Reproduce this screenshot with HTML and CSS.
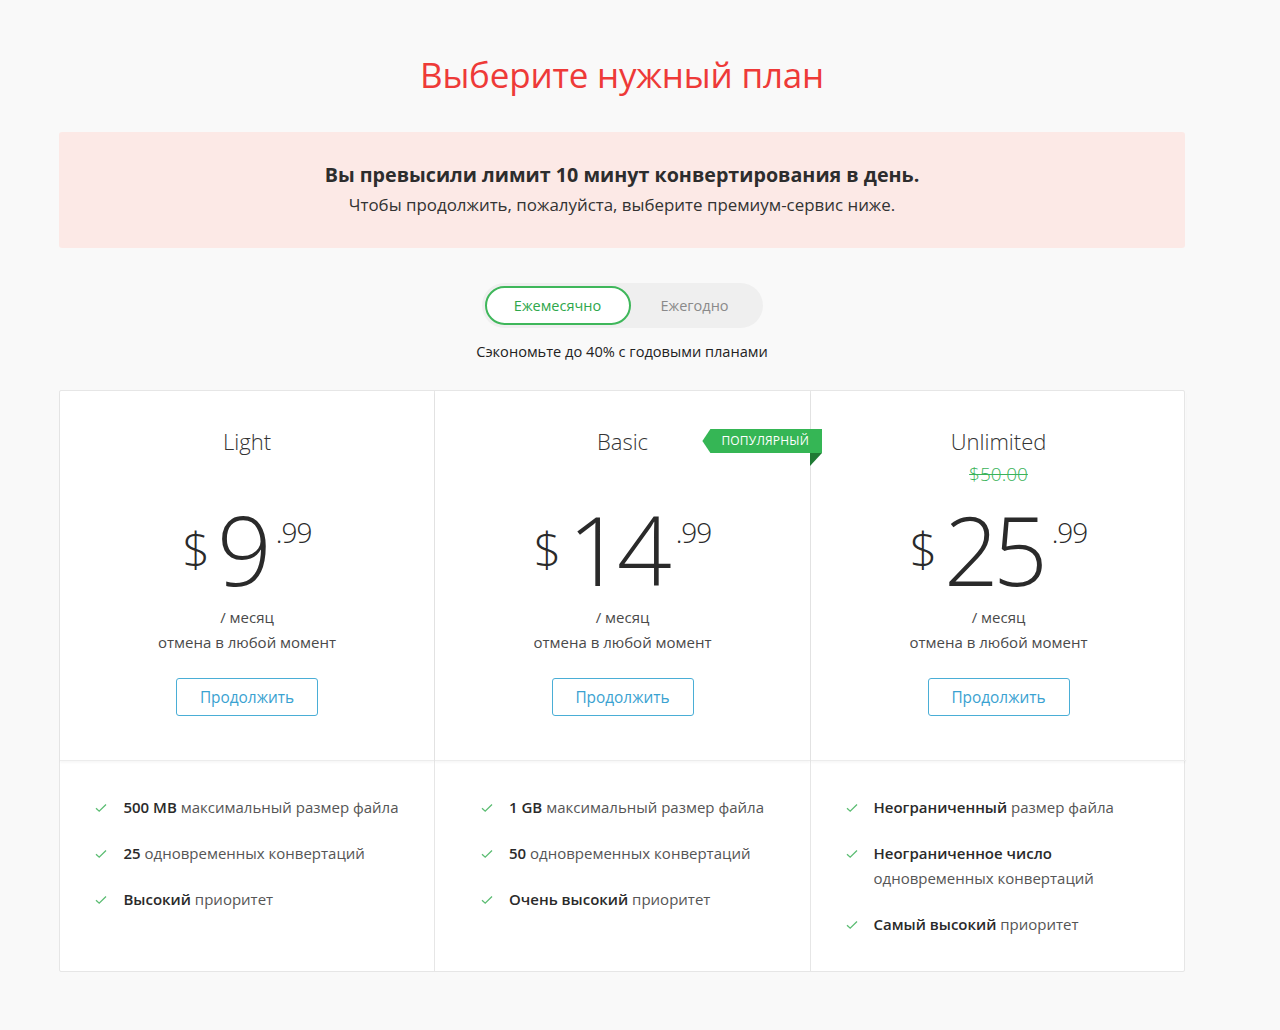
FILE: index.html
```html
<!DOCTYPE html>
<html lang="ru">
<head>
<meta charset="utf-8">
<link rel="stylesheet" href="styles.css">
</head>
<body>
<div class="page">
  <h1 class="title">Выберите нужный план</h1>
  <div class="alert">
    <div class="alert-main">Вы превысили лимит 10 минут конвертирования в день.</div>
    <div class="alert-sub">Чтобы продолжить, пожалуйста, выберите премиум-сервис ниже.</div>
  </div>
  <div class="toggle-wrap">
    <div class="toggle">
      <span class="toggle-opt active">Ежемесячно</span>
      <span class="toggle-opt">Ежегодно</span>
    </div>
  </div>
  <p class="save">Сэкономьте до 40% с годовыми планами</p>

  <div class="plans">
    <div class="plan">
      <div class="plan-top">
        <div class="plan-name">Light</div>
        <div class="old-price"></div>
        <div class="price"><span class="cur">$</span><span class="amount">9</span><span class="cents">.99</span></div>
        <div class="period">/ месяц</div>
        <div class="cancel">отмена в любой момент</div>
        <button class="btn">Продолжить</button>
      </div>
      <div class="plan-bottom">
        <ul class="features">
          <li><svg class="check" viewBox="0 0 12 10"><path d="M1 5.2 4.2 8.2 11 1.5"/></svg><span><b>500 MB</b> максимальный размер файла</span></li>
          <li><svg class="check" viewBox="0 0 12 10"><path d="M1 5.2 4.2 8.2 11 1.5"/></svg><span><b>25</b> одновременных конвертаций</span></li>
          <li><svg class="check" viewBox="0 0 12 10"><path d="M1 5.2 4.2 8.2 11 1.5"/></svg><span><b>Высокий</b> приоритет</span></li>
        </ul>
      </div>
    </div>
    <div class="plan">
      <div class="plan-top">
        <div class="badge">ПОПУЛЯРНЫЙ</div>
        <div class="plan-name">Basic</div>
        <div class="old-price"></div>
        <div class="price"><span class="cur">$</span><span class="amount">14</span><span class="cents">.99</span></div>
        <div class="period">/ месяц</div>
        <div class="cancel">отмена в любой момент</div>
        <button class="btn">Продолжить</button>
      </div>
      <div class="plan-bottom">
        <ul class="features">
          <li><svg class="check" viewBox="0 0 12 10"><path d="M1 5.2 4.2 8.2 11 1.5"/></svg><span><b>1 GB</b> максимальный размер файла</span></li>
          <li><svg class="check" viewBox="0 0 12 10"><path d="M1 5.2 4.2 8.2 11 1.5"/></svg><span><b>50</b> одновременных конвертаций</span></li>
          <li><svg class="check" viewBox="0 0 12 10"><path d="M1 5.2 4.2 8.2 11 1.5"/></svg><span><b>Очень высокий</b> приоритет</span></li>
        </ul>
      </div>
    </div>
    <div class="plan">
      <div class="plan-top">
        <div class="plan-name">Unlimited</div>
        <div class="old-price"><s>$50.00</s></div>
        <div class="price"><span class="cur">$</span><span class="amount">25</span><span class="cents">.99</span></div>
        <div class="period">/ месяц</div>
        <div class="cancel">отмена в любой момент</div>
        <button class="btn">Продолжить</button>
      </div>
      <div class="plan-bottom">
        <ul class="features">
          <li><svg class="check" viewBox="0 0 12 10"><path d="M1 5.2 4.2 8.2 11 1.5"/></svg><span><b>Неограниченный</b> размер файла</span></li>
          <li><svg class="check" viewBox="0 0 12 10"><path d="M1 5.2 4.2 8.2 11 1.5"/></svg><span><b>Неограниченное число</b> одновременных конвертаций</span></li>
          <li><svg class="check" viewBox="0 0 12 10"><path d="M1 5.2 4.2 8.2 11 1.5"/></svg><span><b>Самый высокий</b> приоритет</span></li>
        </ul>
      </div>
    </div>
  </div>
</div>
</body>
</html>
```

FILE: styles.css
```css
* { box-sizing: border-box; }
html, body { margin: 0; padding: 0; }
body {
  background: #f9f9f9;
  font-family: "Open Sans", "Liberation Sans", sans-serif;
  color: #333;
}
.page {
  width: 1126px;
  margin-left: 59px;
  padding-top: 50px;
  padding-bottom: 57px;
}
.title {
  margin: 0;
  text-align: center;
  font-weight: 400;
  font-size: 35px;
  line-height: 50px;
  color: #ee3a38;
  letter-spacing: -0.2px;
}
.alert {
  margin-top: 32px;
  height: 116px;
  background: #fce9e6;
  border-radius: 3px;
  text-align: center;
  padding-top: 28px;
}
.alert-main {
  font-weight: 700;
  font-size: 19.7px;
  line-height: 30px;
  color: #2d2d2d;
}
.alert-sub {
  font-size: 16.9px;
  line-height: 30px;
  color: #333;
}
.toggle-wrap {
  margin-top: 35px;
  display: flex;
  justify-content: center;
}
.toggle {
  display: flex;
  align-items: center;
  width: 281px;
  height: 45px;
  padding: 3px;
  background: #efefef;
  border-radius: 23px;
}
.toggle-opt {
  flex: none;
  text-align: center;
  font-size: 14.5px;
  color: #8a8a8a;
}
.toggle-opt.active {
  width: 146px;
  height: 39px;
  line-height: 35px;
  background: #fff;
  border: 2px solid #3fb75b;
  border-radius: 20px;
  color: #2ea74b;
}
.toggle-opt + .toggle-opt { width: 128px; }
.save {
  margin: 13px 0 0;
  text-align: center;
  font-size: 14.6px;
  line-height: 20px;
  color: #222;
}
.plans {
  margin-top: 29px;
  display: grid;
  grid-template-columns: 374px 376px 376px;
  background: #fff;
  border: 1px solid #e6e6e6;
  border-radius: 2px;
}
.plan {
  display: flex;
  flex-direction: column;
  border-left: 1px solid #e6e6e6;
}
.plan:first-child { border-left: none; }
.plan-top {
  position: relative;
  height: 370px;
  text-align: center;
  padding-top: 34px;
  border-bottom: 1px solid #ececec;
  box-shadow: 0 2px 2px rgba(0,0,0,0.03);
}
.plan-name {
  font-size: 22px;
  font-weight: 300;
  line-height: 32px;
  color: #333;
}
.old-price {
  height: 30px;
  margin-top: 2px;
  font-size: 19px;
  font-weight: 300;
  line-height: 30px;
  color: #3ab35a;
}
.old-price s { text-decoration-thickness: 1px; }
.price {
  display: flex;
  justify-content: center;
  align-items: flex-start;
  margin-top: 12px;
  height: 96px;
  color: #2a2a2a;
  font-weight: 300;
}
.cur {
  font-size: 48px;
  line-height: 48px;
  margin-top: 24px;
  margin-right: 7px;
}
.amount {
  font-size: 96px;
  line-height: 96px;
  letter-spacing: -6px;
}
.cents {
  font-size: 28px;
  line-height: 28px;
  letter-spacing: -1px;
  margin-top: 17px;
  margin-left: 10px;
}
.period, .cancel {
  font-size: 15px;
  line-height: 25px;
  color: #4a4a4a;
}
.period { margin-top: 8px; }
.btn {
  margin-top: 23px;
  width: 142px;
  height: 38px;
  background: #fff;
  border: 1px solid #4aaed6;
  border-radius: 3px;
  color: #3aa2d1;
  font-family: "Open Sans", "Liberation Sans", sans-serif;
  font-size: 15.4px;
  cursor: pointer;
}
.badge {
  position: absolute;
  top: 38px;
  right: -12px;
  height: 24px;
  padding: 0 13px 0 19px;
  background: #35b655;
  color: #fff;
  font-size: 12px;
  line-height: 24px;
  letter-spacing: 0.2px;
  clip-path: polygon(8px 0, 100% 0, 100% 100%, 8px 100%, 0 50%);
  z-index: 2;
}
.plan:nth-child(2) .plan-top::after {
  content: "";
  position: absolute;
  top: 62px;
  right: -12px;
  width: 0;
  height: 0;
  border-top: 13px solid #1f7a34;
  border-right: 12px solid transparent;
  z-index: 2;
}
.plan-bottom {
  flex: 1;
  text-align: center;
  padding: 34px 0 34px;
}
.features {
  display: inline-block;
  max-width: 306px;
  text-align: left;
  margin: 0;
  padding: 0;
  list-style: none;
}
.features li {
  display: flex;
  align-items: flex-start;
  font-size: 15px;
  line-height: 25px;
  color: #555;
  margin-bottom: 21px;
}
.features li:last-child { margin-bottom: 0; }
.features b { color: #2a2a2a; font-weight: 600; }
.check {
  flex: none;
  width: 12px;
  height: 10px;
  margin-top: 8px;
  margin-right: 16px;
  fill: none;
  stroke: #5cbd73;
  stroke-width: 1.3;
}
```
